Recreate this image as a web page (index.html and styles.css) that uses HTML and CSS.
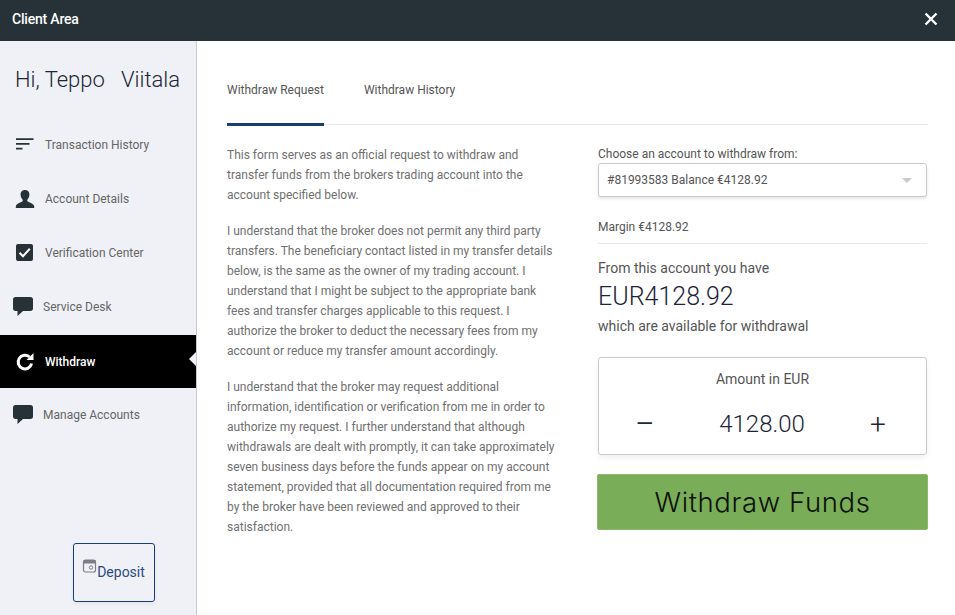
FILE: index.html
```html
<!DOCTYPE html>
<html lang="en">
<head>
    <meta charset="UTF-8">
    <meta name="viewport" content="width=device-width, initial-scale=1.0">
    <title>Client Area</title>
    <link rel="stylesheet" href="styles.css">
</head>
<body>
    <div class="header">
        <span class="header-title">Client Area</span>
        <svg class="close-icon" width="14" height="14" viewBox="0 0 14 14">
            <path d="M1.5 1.5 L12.5 12.5 M12.5 1.5 L1.5 12.5" stroke="#fff" stroke-width="2.4" fill="none"/>
        </svg>
    </div>

    <div class="page">
        <div class="sidebar">
            <h2 class="greeting">Hi, Teppo&nbsp;&nbsp; Viitala</h2>

            <ul class="nav">
                <li class="nav-item">
                    <svg class="nav-icon" viewBox="0 0 20 20">
                        <path d="M1 3.2h17.5v1.7H1zM1 8h13.5v1.7H1zM1 12.8h6.5v1.7H1z" fill="#263238"/>
                    </svg>
                    <span>Transaction History</span>
                </li>
                <li class="nav-item">
                    <svg class="nav-icon" viewBox="0 0 20 20">
                        <path d="M10 1c3 0 4.6 2.2 4.4 5-.1 1.8-.9 3.4-1.9 4.4-.4.4-.4 1.5.2 2 1.200.9 5.300 1.900 6.300 4.100.2.500.2 1.500.2 2.500H.800c0-1 0-2 .2-2.500 1-2.200 5.100-3.200 6.300-4.100.6-.5.6-1.600.2-2-1-1-1.800-2.600-1.900-4.400C5.400 3.200 7 1 10 1z" fill="#263238"/>
                    </svg>
                    <span>Account Details</span>
                </li>
                <li class="nav-item">
                    <svg class="nav-icon" viewBox="0 0 20 20">
                        <rect x="1" y="1" width="17" height="17" rx="2" fill="#263238"/>
                        <path d="M4.500 9.800 L8 13.200 L14.800 5.800" stroke="#fff" stroke-width="2" fill="none"/>
                    </svg>
                    <span>Verification Center</span>
                </li>
                <li class="nav-item nav-item-chat">
                    <svg class="nav-icon" viewBox="0 0 20 20">
                        <path d="M2.500 0h15C19 0 20 1 20 2.500v9c0 1.500-1 2.500-2.500 2.500H10l-5.500 5v-5h-2C1 14 0 13 0 11.500v-9C0 1 1 0 2.500 0z" fill="#263238"/>
                    </svg>
                    <span>Service Desk</span>
                </li>
                <li class="nav-item nav-item-active">
                    <svg class="nav-icon" viewBox="0 0 20 20">
                        <path d="M14.500 5A6.800 6.800 0 1 0 16.600 11.500" stroke="#fff" stroke-width="3" fill="none"/>
                        <path d="M11.500 8 L18.500 8 L18.500 1 Z" fill="#fff"/>
                    </svg>
                    <span>Withdraw</span>
                </li>
                <li class="nav-item nav-item-chat">
                    <svg class="nav-icon" viewBox="0 0 20 20">
                        <path d="M2.500 0h15C19 0 20 1 20 2.500v9c0 1.500-1 2.500-2.500 2.500H10l-5.500 5v-5h-2C1 14 0 13 0 11.500v-9C0 1 1 0 2.500 0z" fill="#263238"/>
                    </svg>
                    <span>Manage Accounts</span>
                </li>
            </ul>

            <div class="deposit-wrap">
                <button class="deposit-btn">
                    <svg class="deposit-icon" width="15" height="15" viewBox="0 0 15 15">
                        <rect x="1.500" y="1" width="12" height="12" rx="2" fill="none" stroke="#7a7f88" stroke-width="1.200"/>
                        <rect x="1.500" y="1" width="12" height="3.500" fill="#7a7f88"/>
                        <circle cx="9" cy="8.500" r="1.700" fill="none" stroke="#7a7f88" stroke-width="1"/>
                    </svg><span>Deposit</span>
                </button>
            </div>
        </div>

        <div class="content">
            <div class="tabs">
                <div class="tab tab-active">Withdraw Request</div>
                <div class="tab">Withdraw History</div>
            </div>

            <div class="columns">
                <div class="terms">
                    <p>This form serves as an official request to withdraw and transfer funds from the brokers trading account into the account specified below.</p>
                    <p>I understand that the broker does not permit any third party transfers. The beneficiary contact listed in my transfer details below, is the same as the owner of my trading account. I understand that I might be subject to the appropriate bank fees and transfer charges applicable to this request. I authorize the broker to deduct the necessary fees from my account or reduce my transfer amount accordingly.</p>
                    <p>I understand that the broker may request additional information, identification or verification from me in order to authorize my request. I further understand that although withdrawals are dealt with promptly, it can take approximately seven business days before the funds appear on my account statement, provided that all documentation required from me by the broker have been reviewed and approved to their satisfaction.</p>
                </div>

                <div class="form">
                    <label class="field-label">Choose an account to withdraw from:</label>
                    <div class="select">
                        <span>#81993583 Balance €4128.92</span>
                        <span class="select-arrow"></span>
                    </div>
                    <div class="margin-row">Margin €4128.92</div>
                    <div class="available">From this account you have</div>
                    <div class="balance">EUR4128.92</div>
                    <div class="available">which are available for withdrawal</div>
                    <div class="amount-box">
                        <div class="amount-label">Amount in EUR</div>
                        <div class="amount-row">
                            <span class="stepper stepper-minus">—</span>
                            <span class="amount-value">4128.00</span>
                            <span class="stepper stepper-plus">+</span>
                        </div>
                    </div>
                    <button class="withdraw-btn">Withdraw Funds</button>
                </div>
            </div>
        </div>
    </div>
</body>
</html>
```

FILE: styles.css
```css
body {
    font-family: Roboto, "Liberation Sans", sans-serif;
    background-color: #fff;
    margin: 0;
    height: 615px;
    overflow: hidden;
}

.header {
    display: flex;
    justify-content: space-between;
    align-items: center;
    box-sizing: border-box;
    height: 41px;
    padding: 0 17px 4px 12px;
    background-color: #263238;
}

.header-title {
    color: #fff;
    font-size: 14px;
    font-weight: 500;
    letter-spacing: -0.2px;
}

.page {
    display: flex;
    height: 574px;
}

.sidebar {
    display: flex;
    flex-direction: column;
    box-sizing: border-box;
    width: 197px;
    flex-shrink: 0;
    background-color: #eff1f6;
    border-right: 1px solid #c8cad0;
}

.greeting {
    margin: 25px 0 0 15px;
    font-size: 22px;
    font-weight: 300;
    line-height: 28px;
    color: #1b2638;
    white-space: nowrap;
}

.nav {
    list-style: none;
    margin: 24px 0 0;
    padding: 0;
}

.nav-item {
    position: relative;
    display: flex;
    align-items: center;
    height: 54px;
    padding-left: 15px;
    font-size: 12px;
    color: #666;
}

.nav-icon {
    width: 20px;
    height: 20px;
    margin-right: 10px;
    flex-shrink: 0;
}

.nav-item-chat {
    padding-left: 13px;
}

.nav-item-active {
    height: 53px;
    margin-top: 1px;
    background-color: #000;
    color: #fff;
    font-weight: 500;
}

/* little notch pointing at the content */
.nav-item-active::after {
    content: "";
    position: absolute;
    right: 0;
    top: 17px;
    border-top: 7px solid transparent;
    border-bottom: 7px solid transparent;
    border-right: 7px solid #eff1f6;
}

.deposit-wrap {
    margin-top: auto;
    padding: 0 0 13px 73px;
}

.deposit-btn {
    display: flex;
    align-items: center;
    justify-content: center;
    box-sizing: border-box;
    width: 82px;
    height: 59px;
    padding: 0 0 2px;
    background: transparent;
    border: 1px solid #1a3c78;
    border-radius: 3px;
    box-shadow: 0 2px 4px rgba(0, 0, 0, 0.05);
    color: #2b4a80;
    font-family: inherit;
    font-size: 14px;
}

.deposit-icon {
    margin: -10px 0 0 -1px;
}

.content {
    flex: 1;
    padding: 0 27px 0 30px;
}

.tabs {
    display: flex;
    gap: 40px;
    height: 84px;
    box-sizing: border-box;
    border-bottom: 1px solid #e8e9ec;
}

.tab {
    padding-top: 42px;
    height: 85px;
    box-sizing: border-box;
    font-size: 12px;
    line-height: 14px;
    color: #555;
}

.tab-active {
    border-bottom: 3px solid #1a3c78;
}

.columns {
    display: flex;
    justify-content: space-between;
    padding-top: 20px;
}

.terms {
    width: 330px;
    font-size: 12px;
    line-height: 20px;
    color: #707070;
}

.terms p {
    margin: 0 0 16px;
}

.form {
    width: 330px;
}

.field-label {
    display: block;
    font-size: 12px;
    line-height: 14px;
    color: #555;
    margin-top: 2px;
}

.select {
    display: flex;
    justify-content: space-between;
    align-items: center;
    box-sizing: border-box;
    width: 329px;
    height: 34px;
    margin-top: 2px;
    padding: 0 14px 0 8px;
    background-color: #fff;
    border: 1px solid #c8cad0;
    border-radius: 3px;
    box-shadow: 0 2px 3px rgba(0, 0, 0, 0.1);
    font-size: 12px;
    color: #555;
}

.select-arrow {
    border-top: 5px solid #c8cad0;
    border-left: 5px solid transparent;
    border-right: 5px solid transparent;
}

.margin-row {
    width: 329px;
    height: 25px;
    margin-top: 22px;
    padding-top: 1px;
    box-sizing: border-box;
    border-bottom: 1px solid #e8e9ec;
    font-size: 12px;
    line-height: 14px;
    color: #555;
}

.available {
    font-size: 14px;
    line-height: 16px;
    color: #555;
}

.margin-row + .available {
    margin-top: 16px;
}

.balance {
    font-size: 25px;
    font-weight: 300;
    line-height: 28px;
    margin: 7px 0;
    color: #1b2638;
}

.amount-box {
    box-sizing: border-box;
    width: 329px;
    height: 98px;
    margin-top: 23px;
    padding-top: 13px;
    background-color: #fff;
    border: 1px solid #c8cad0;
    border-radius: 3px;
    box-shadow: 0 3px 5px rgba(0, 0, 0, 0.06);
    text-align: center;
}

.amount-label {
    font-size: 14px;
    line-height: 16px;
    color: #555;
}

.amount-row {
    display: flex;
    justify-content: space-between;
    align-items: center;
    margin-top: 20px;
    padding: 0 37px;
    color: #1b2638;
}

.stepper {
    font-size: 28px;
    line-height: 32px;
    width: 22px;
}

.stepper-minus {
    font-size: 22px;
    text-align: left;
}

.stepper-plus {
    font-weight: 300;
    padding-top: 2px;
}

.amount-value {
    font-size: 24px;
    font-weight: 300;
    line-height: 32px;
    margin-left: -1px;
}

.withdraw-btn {
    display: block;
    box-sizing: border-box;
    width: 331px;
    height: 56px;
    margin: 19px 0 0 -1px;
    background-color: #7aad57;
    border: 1px solid #8ab96b;
    border-radius: 2px;
    color: #0c120a;
    font-family: Inter, "Open Sans", sans-serif;
    font-size: 27.5px;
    font-weight: 300;
    letter-spacing: 0.6px;
}
```
